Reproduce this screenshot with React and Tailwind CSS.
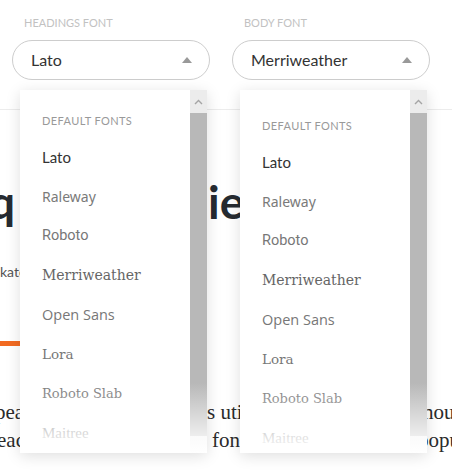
import React from "react"

const fonts = [
  { name: "Lato", cls: "font-['Lato'] text-[15px] text-[#333]" },
  { name: "Raleway", cls: "font-['Noto_Sans'] text-[14px] text-[#7a7a7a]" },
  { name: "Roboto", cls: "font-['Roboto'] text-[14.5px] text-[#777]" },
  { name: "Merriweather", cls: "font-['DejaVu_Serif'] text-[14px] text-[#666]" },
  { name: "Open Sans", cls: "font-['Open_Sans'] text-[14.5px] text-[#777]" },
  { name: "Lora", cls: "font-['DejaVu_Serif'] text-[13.5px] text-[#777]" },
  { name: "Roboto Slab", cls: "font-['DejaVu_Serif'] text-[13px] text-[#777]" },
  { name: "Maitree", cls: "font-['Liberation_Serif'] text-[15px] text-[#777]" },
]

const Caret = () => (
  <svg width="10" height="6" viewBox="0 0 10 6">
    <path d="M5 0 L10 6 L0 6 Z" fill="#999" />
  </svg>
)

const Select = ({ label, value }) => (
  <div className="w-[198px]">
    <div className="pl-[12px] text-[11px] leading-[14px] text-[#c2c2c2]">{label}</div>
    <div className="mt-[10px] h-[40px] rounded-full border border-[#cdcdcd] flex items-center justify-between pl-[18px] pr-[17px] text-[16px] text-[#333]">
      <span>{value}</span>
      <Caret />
    </div>
  </div>
)

const FontMenu = ({ pos, pad }) => (
  <div className={`absolute top-[90px] h-[363px] w-[187px] bg-white flex shadow-[0_3px_14px_rgba(0,0,0,0.13)] ${pos}`}>
    <div className={`flex-1 pl-[22px] ${pad}`}>
      <div className="h-[18px] leading-[18px] mb-[7px] text-[11px] tracking-[0.4px] text-[#999]">DEFAULT FONTS</div>
      {fonts.map((f) => (
        <div key={f.name} className={`h-[39.5px] flex items-center ${f.cls}`}>
          {f.name}
        </div>
      ))}
    </div>
    <div className="w-[17px] flex flex-col">
      <div className="h-[23px] bg-[#ececec] flex items-center justify-center">
        <svg width="9" height="6" viewBox="0 0 9 6">
          <polyline points="1,5 4.5,1.5 8,5" fill="none" stroke="#a5a5a5" strokeWidth="1.4" />
        </svg>
      </div>
      <div className="flex-1 bg-[#b8b8b8]" />
      <div className="h-[17px] bg-[#ececec]" />
    </div>
    <div className="absolute inset-x-0 bottom-0 h-[70px] bg-linear-to-b from-white/0 to-white to-[100%]" />
  </div>
)

export default function App() {
  return (
    <div className="relative w-[452px] h-[471px] overflow-hidden bg-white font-['Lato']">
      <div className="flex gap-[22px] pl-[12px] pt-[16px]">
        <Select label="HEADINGS FONT" value="Lato" />
        <Select label="BODY FONT" value="Merriweather" />
      </div>
      <div className="mt-[29px] border-t border-[#ececec]" />

      <div className="mt-[64px] flex whitespace-nowrap text-[46px] leading-[56px] font-bold text-[#262b31]">
        <div className="w-[15px] shrink-0 flex justify-end">
          <span>Uniq</span>
        </div>
        <div className="ml-[193px]">ies of type</div>
      </div>

      <div className="mt-[32px] whitespace-nowrap text-[14px] leading-[20px] text-[#555]">katerina Petrova · 5 min read</div>

      <div className="mt-[59px] h-[5px] w-[80px] bg-[#f26a21]" />

      <div className="mt-[52px] font-['Liberation_Serif'] text-[21px] leading-[28px] text-[#2b2b2b] whitespace-nowrap">
        <div className="flex">
          <div className="w-[200px] shrink-0 overflow-hidden -ml-[5px]">peak of the design</div>
          <div className="w-[210px] shrink-0 overflow-hidden ml-[12px]">s utilize the best</div>
          <div className="ml-[6px]">hough</div>
        </div>
        <div className="flex">
          <div className="w-[200px] shrink-0 overflow-hidden -ml-[3px]">each heading gets a g</div>
          <div className="w-[205px] shrink-0 overflow-hidden ml-[15px]">fonts from the</div>
          <div className="ml-[1px]">popular</div>
        </div>
      </div>

      <FontMenu pos="left-[20px]" pad="pt-[22px]" />
      <FontMenu pos="left-[240px]" pad="pt-[27px]" />
    </div>
  )
}
